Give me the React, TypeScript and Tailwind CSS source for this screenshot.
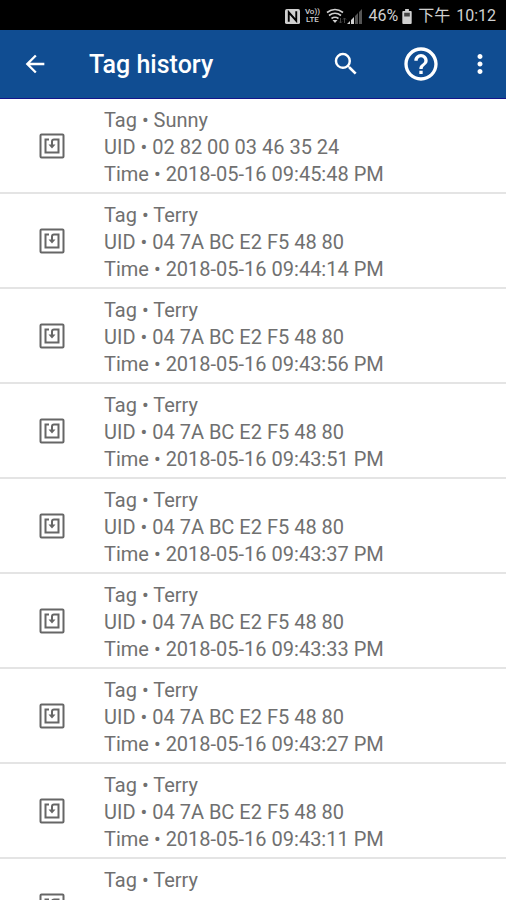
import { MdArrowBack, MdHelpOutline, MdMoreVert, MdSearch } from 'react-icons/md';

const history = [
  { tag: 'Sunny', uid: '02 82 00 03 46 35 24', time: '2018-05-16 09:45:48 PM' },
  { tag: 'Terry', uid: '04 7A BC E2 F5 48 80', time: '2018-05-16 09:44:14 PM' },
  { tag: 'Terry', uid: '04 7A BC E2 F5 48 80', time: '2018-05-16 09:43:56 PM' },
  { tag: 'Terry', uid: '04 7A BC E2 F5 48 80', time: '2018-05-16 09:43:51 PM' },
  { tag: 'Terry', uid: '04 7A BC E2 F5 48 80', time: '2018-05-16 09:43:37 PM' },
  { tag: 'Terry', uid: '04 7A BC E2 F5 48 80', time: '2018-05-16 09:43:33 PM' },
  { tag: 'Terry', uid: '04 7A BC E2 F5 48 80', time: '2018-05-16 09:43:27 PM' },
  { tag: 'Terry', uid: '04 7A BC E2 F5 48 80', time: '2018-05-16 09:43:11 PM' },
  { tag: 'Terry', uid: '', time: '' },
];

function TagIcon() {
  return (
    <svg width="26" height="26" viewBox="0 0 26 26" fill="none" stroke="currentColor" aria-hidden="true">
      <rect x="1.5" y="1.5" width="23" height="23" rx="1" strokeWidth="2" />
      <path d="M10 6.5H6.5V19.5H19.5V6.5H15Q13 6.5 13 8.5V13" strokeWidth="2" />
      <path d="M9.500 11.500h7L13 15.500z" fill="currentColor" stroke="none" />
    </svg>
  );
}

function StatusBar() {
  return (
    <div className="flex h-[30px] shrink-0 items-center justify-end bg-black pt-0.5 pr-2.5 text-base text-[#d0d0d0]">
      <svg width="15" height="15" viewBox="0 0 16 16" aria-label="NFC">
        <rect width="16" height="16" rx="2" fill="currentColor" />
        <path d="M4 13.500V3.500L12 12.500V2.500" fill="none" stroke="#000" strokeWidth="2" />
      </svg>
      <div className="ml-1 flex w-4 flex-col items-center text-[8px] leading-[8px] font-medium">
        <span>Vo))</span>
        <span>LTE</span>
      </div>
      <svg className="ml-1.5" width="21" height="16" viewBox="0 0 21 16" fill="none" stroke="currentColor" strokeWidth="1.6" aria-label="Wi-Fi">
        <path d="M1 4.500Q9-1.500 17 4.500M3 7.500Q9 3 15 7.500M5.500 10.500Q9 8 12.500 10.500" />
        <path d="M6.500 12h5L9 15z" fill="currentColor" stroke="none" />
        <path d="M14.500 10v5M13 13.500l1.500 1.500 1.500-1.500M18.500 15v-5M17 11.500l1.500-1.500 1.500 1.500" stroke="#444" strokeWidth="1" />
      </svg>
      {/* four bars, two lit */}
      <svg width="15" height="15" viewBox="0 0 15 15" aria-label="Signal">
        <path d="M8 7 11 4V15H8zM12 3 15 0V15h-3z" fill="#555" />
        <path d="M0 15 3 12V15zM4 11 7 8V15H4z" fill="currentColor" />
      </svg>
      <span className="ml-1.5">46%</span>
      <svg className="ml-1" width="10" height="15" viewBox="0 0 10 16" fill="currentColor" aria-label="Battery">
        <path d="M3 0h4v2h2q1 0 1 1v12q0 1-1 1H1q-1 0-1-1V3q0-1 1-1h2z" />
        <path d="M2 4h6v4H2z" fill="#444" />
      </svg>
      <div className="ml-1.5 flex gap-1.5">
        <span>下午</span>
        <span>10:12</span>
      </div>
    </div>
  );
}

export default function App() {
  return (
    <div className="flex h-screen flex-col overflow-hidden bg-white font-[Roboto,'Noto_Sans_CJK_TC',sans-serif]">
      <StatusBar />
      <header className="flex h-[69px] shrink-0 items-center border-b border-[#15158a] bg-[#104d92] text-white">
        <button type="button" aria-label="Back" className="ml-[21px]">
          <MdArrowBack size={28} />
        </button>
        <h1 className="ml-10 flex-1 pt-0.5 text-[25px] font-medium">Tag history</h1>
        <button type="button" aria-label="Search" className="mr-10">
          <MdSearch size={30} />
        </button>
        <button type="button" aria-label="Help" className="mr-6">
          <MdHelpOutline size={40} />
        </button>
        <button type="button" aria-label="More options" className="mr-[11px]">
          <MdMoreVert size={30} />
        </button>
      </header>
      <ul className="min-h-0 flex-1 overflow-hidden">
        {history.map((entry, i) => (
          <li key={i} className="flex h-[95px] border-b-2 border-[#e4e4e4] text-[#707070]">
            <div className="flex w-[104px] shrink-0 items-center justify-center text-[#666]">
              <TagIcon />
            </div>
            <div className="pt-2 text-xl leading-[27px]">
              <p>Tag • {entry.tag}</p>
              {entry.uid && <p>UID • {entry.uid}</p>}
              {entry.time && <p>Time • {entry.time}</p>}
            </div>
          </li>
        ))}
      </ul>
    </div>
  );
}
